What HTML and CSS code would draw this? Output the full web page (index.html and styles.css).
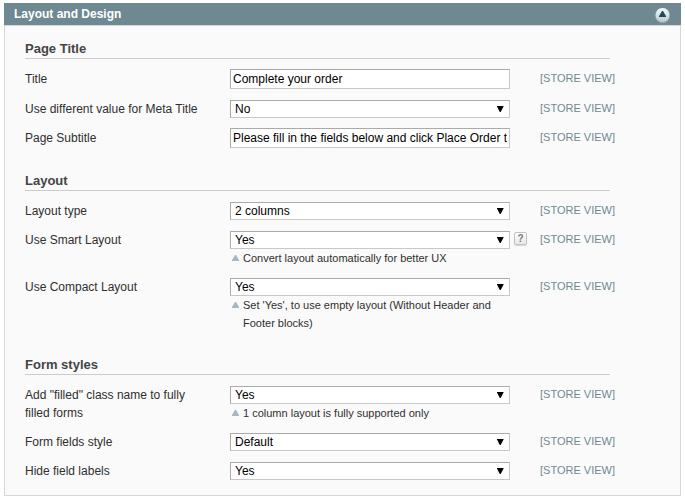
FILE: index.html
```html
<!DOCTYPE html>
<html lang="en">
<head>
<meta charset="utf-8">
<title>Layout and Design</title>
<link rel="stylesheet" href="styles.css">
</head>
<body>
<svg class="defs" width="0" height="0" aria-hidden="true">
  <symbol id="arrow" viewBox="0 0 7 7"><path d="M0 0h6.500v.5L3.700 6h-.9L0 .5z"/></symbol>
  <symbol id="note" viewBox="0 0 7 6"><path d="M3 0h1l3 5v1H0V5z"/></symbol>
</svg>
<section class="panel">
  <header class="panel-head">
    <h3>Layout and Design</h3>
    <svg class="toggle" width="16" height="17" viewBox="0 0 16 17">
      <defs><linearGradient id="disc" x1="0" y1="0" x2="0" y2="1"><stop offset="0" stop-color="#f4f8f9"/><stop offset="1" stop-color="#bccbd0"/></linearGradient></defs>
      <circle cx="8.500" cy="8.500" r="7.700" fill="#8fa5ac"/>
      <circle cx="8.500" cy="8" r="6.900" fill="url(#disc)"/>
      <path d="M8 4h1l3 5.200V10H5v-.8z" fill="#1f485b"/>
    </svg>
  </header>
  <div class="panel-body">
    <h4>Page Title</h4>
    <div class="row row-text"><label>Title</label><div class="value"><input type="text" value="Complete your order"></div><span class="scope">[STORE VIEW]</span></div>
    <div class="row"><label>Use different value for Meta Title</label><div class="value"><div class="pick"><select><option>No</option></select><svg class="arrow"><use href="#arrow"/></svg></div></div><span class="scope">[STORE VIEW]</span></div>
    <div class="row row-text"><label>Page Subtitle</label><div class="value"><input type="text" value="Please fill in the fields below and click Place Order to complete your purchase"></div><span class="scope">[STORE VIEW]</span></div>

    <h4>Layout</h4>
    <div class="row"><label>Layout type</label><div class="value"><div class="pick"><select><option>2 columns</option></select><svg class="arrow"><use href="#arrow"/></svg></div></div><span class="scope">[STORE VIEW]</span></div>
    <div class="row"><label>Use Smart Layout</label><div class="value"><div class="pick"><select><option>Yes</option></select><svg class="arrow"><use href="#arrow"/></svg><span class="help">?</span></div><p class="note"><svg><use href="#note"/></svg><span>Convert layout automatically for better UX</span></p></div><span class="scope">[STORE VIEW]</span></div>
    <div class="row"><label>Use Compact Layout</label><div class="value"><div class="pick"><select><option>Yes</option></select><svg class="arrow"><use href="#arrow"/></svg></div><p class="note"><svg><use href="#note"/></svg><span>Set 'Yes', to use empty layout (Without Header and Footer blocks)</span></p></div><span class="scope">[STORE VIEW]</span></div>

    <h4>Form styles</h4>
    <div class="row"><label>Add "filled" class name to fully filled forms</label><div class="value"><div class="pick"><select><option>Yes</option></select><svg class="arrow"><use href="#arrow"/></svg></div><p class="note"><svg><use href="#note"/></svg><span>1 column layout is fully supported only</span></p></div><span class="scope">[STORE VIEW]</span></div>
    <div class="row"><label>Form fields style</label><div class="value"><div class="pick"><select><option>Default</option></select><svg class="arrow"><use href="#arrow"/></svg></div></div><span class="scope">[STORE VIEW]</span></div>
    <div class="row"><label>Hide field labels</label><div class="value"><div class="pick"><select><option>Yes</option></select><svg class="arrow"><use href="#arrow"/></svg></div></div><span class="scope">[STORE VIEW]</span></div>
  </div>
</section>
</body>
</html>
```

FILE: styles.css
```css
* { box-sizing: border-box; }

body {
  margin: 0;
  padding: 3px 4px 0;
  background: #fff;
  color: #2f2f2f;
  font: 12px/18px "Liberation Sans", Arial, sans-serif;
  overflow: hidden;
}

.defs { position: absolute; }

.panel { width: 677px; }

.panel-head {
  display: flex;
  align-items: center;
  justify-content: space-between;
  height: 22px;
  padding: 0 11px 0 10px;
  background: #6f8992;
  color: #fff;
}

.panel-head h3 { margin: 0; font-size: 12px; line-height: 18px; }

.toggle { margin-top: 3px; }

.panel-body {
  padding: 14px 20px 9px;
  border: 1px solid #d6d6d6;
  background: #fafafa;
}

h4 {
  width: 585px;
  height: 19px;
  margin: 18px 0 6px;
  border-bottom: 1px solid #ccc;
  color: #444;
  font-size: 13px;
  line-height: 18px;
}

h4:first-child { margin-top: 0; }

.row {
  display: grid;
  grid-template-columns: 175px 280px 90px;
  column-gap: 30px;
  padding: 5px 0 6px;
}

.row-text { padding-bottom: 7px; }

input, select {
  display: block;
  width: 280px;
  margin: 0;
  border: 1px solid;
  border-color: #aaa #c8c8c8 #c8c8c8 #aaa;
  border-radius: 0;
  background: #fff;
  color: #000;
  font: 12px "Liberation Sans", Arial, sans-serif;
  outline: 0;
}

input { height: 20px; margin: -1px 0; padding: 2px; }

select {
  height: 18px;
  padding: 0 20px 0 4px;
  appearance: none;
}

.pick { position: relative; }

.arrow {
  position: absolute;
  top: 6px;
  right: 6px;
  width: 7px;
  height: 7px;
  pointer-events: none;
}

.help {
  position: absolute;
  top: 1px;
  left: 284px;
  width: 13px;
  height: 13px;
  border: 1px solid #bfc3c5;
  border-radius: 2px;
  background: linear-gradient(#fff, #e6e8e9);
  box-shadow: 0 1px 1px #d5d5d5;
  color: #777;
  font: bold 10px/12px "Liberation Sans", Arial, sans-serif;
  text-align: center;
}

.note {
  display: flex;
  gap: 4px;
  margin: 0;
  padding-left: 2px;
  font-size: 11px;
}

.note svg { flex: none; width: 7px; height: 6px; margin-top: 6px; fill: #a7b8c0; }

.scope {
  margin-top: -1px;
  color: #6f8992;
  font-size: 11px;
  white-space: nowrap;
}
```
